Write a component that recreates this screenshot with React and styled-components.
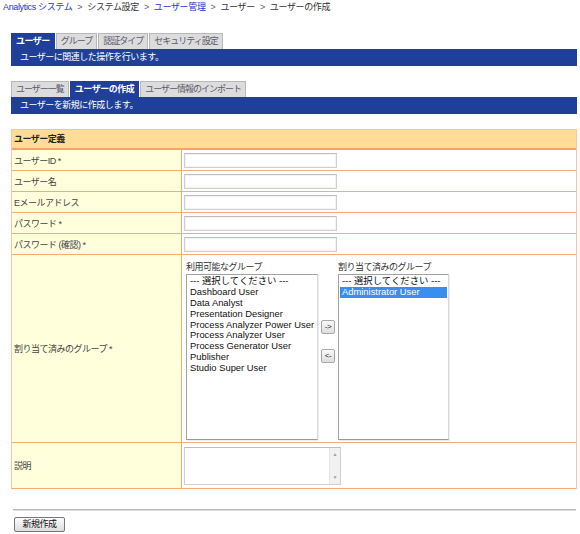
import React from 'react';
import styled, { createGlobalStyle } from 'styled-components';

const Global = createGlobalStyle`
  html, body { margin: 0; padding: 0; background: #fff; }
  body {
    font-family: "Liberation Sans", "Noto Sans CJK JP", sans-serif;
    font-size: 9px;
    color: #333;
  }
  * { box-sizing: border-box; }
`;

const Page = styled.div`
  width: 580px;
  padding: 1px 0 0 3px;
`;

const Breadcrumb = styled.div`
  height: 13px;
  line-height: 13px;
  white-space: nowrap;
  letter-spacing: -0.35px;
`;

const Crumb = styled.span`
  color: ${p => (p.$link ? '#1f32d6' : '#333')};
`;

const Sep = styled.span`
  color: #666;
  margin: 0 5px;
`;

const Content = styled.div`
  margin-left: 8px;
  width: 566px;
`;

const TabBlock = styled.div`
  margin-top: ${p => p.$top}px;
`;

const TabRow = styled.div`
  display: flex;
  height: 16px;
`;

const Tab = styled.div`
  height: 16px;
  line-height: 15px;
  padding: 0 4px;
  margin-right: 1px;
  white-space: nowrap;
  letter-spacing: ${p => (p.$active ? '-0.5px' : '-1px')};
  background: ${p => (p.$active ? '#203f98' : '#dcdcdc')};
  color: ${p => (p.$active ? '#fff' : '#5a5a6a')};
  font-weight: ${p => (p.$active ? 'bold' : 'normal')};
  border: 1px solid ${p => (p.$active ? '#203f98' : '#b8b8b8')};
  border-bottom: none;
`;

const InfoBar = styled.div`
  height: 17px;
  line-height: 17px;
  background: #203f98;
  color: #fff;
  padding-left: 9px;
  letter-spacing: -0.5px;
`;

const Form = styled.div`
  margin-top: 15px;
  display: grid;
  grid-template-columns: 170px 1fr;
  border: 1px solid #ffc2a0;
  border-bottom-color: #ffa877;
`;

const Header = styled.div`
  grid-column: 1 / 3;
  height: 20px;
  line-height: 18px;
  background: #ffdc98;
  border-bottom: 2px solid #ff9e6c;
  padding-left: 2px;
  font-weight: bold;
  color: #222;
  letter-spacing: -0.5px;
`;

const Label = styled.div`
  height: ${p => p.$h}px;
  background: #ffffdc;
  border-right: 1px solid #ffa877;
  border-bottom: ${p => (p.$last ? 'none' : '1px solid #ffa877')};
  display: flex;
  align-items: center;
  padding-left: 2px;
  color: #444;
  letter-spacing: -0.5px;
`;

const Value = styled.div`
  height: ${p => p.$h}px;
  border-bottom: ${p => (p.$last ? 'none' : '1px solid #ffa877')};
  display: flex;
  align-items: ${p => p.$align || 'center'};
  padding-left: 2px;
  padding-top: ${p => p.$pt || 0}px;
`;

const TextInput = styled.div`
  width: 153px;
  height: 15px;
  border: 1px solid #cfcfcf;
  border-top-color: #bdbdbd;
  background: #fff;
  box-shadow: inset 0 0 0 1px #f4f4f4;
`;

const GroupArea = styled.div`
  display: flex;
  align-items: flex-start;
  padding-left: 2px;
`;

const ListCol = styled.div`
  display: flex;
  flex-direction: column;
`;

const ListCaption = styled.div`
  height: 11px;
  line-height: 11px;
  margin-bottom: 1px;
  color: #333;
  letter-spacing: -0.5px;
  white-space: nowrap;
`;

const ListBox = styled.div`
  width: ${p => p.$w}px;
  height: 166px;
  border: 1px solid #a3a3a3;
  border-right-color: #d8d8d8;
  border-bottom-color: #9a9a9a;
  box-shadow: 1px 1px 0 #eeeeee;
  background: #fff;
  padding: 1px 1px;
  overflow: hidden;
`;

const Option = styled.div`
  height: 10.9px;
  line-height: 10.9px;
  font-size: 9.4px;
  padding-left: 2px;
  white-space: nowrap;
  color: ${p => (p.$selected ? '#fff' : '#111')};
  background: ${p => (p.$selected ? '#3a8ef0' : 'transparent')};
`;

const MoveButtons = styled.div`
  display: flex;
  flex-direction: column;
  gap: 15px;
  margin: 58px 3px 0 3px;
`;

const SmallButton = styled.div`
  width: 14px;
  height: 14px;
  border: 1px solid #a8a8a8;
  border-radius: 2px;
  background: linear-gradient(#f8f8f8, #dedede);
  font-size: 8px;
  line-height: 12px;
  text-align: center;
  color: #222;
  letter-spacing: -0.5px;
`;

const TextArea = styled.div`
  width: 157px;
  height: 38px;
  display: flex;
  border: 1px solid #cfcfcf;
  border-top-color: #bdbdbd;
  background: #fff;
`;

const TextAreaBody = styled.div`
  flex: 1;
`;

const ScrollStrip = styled.div`
  width: 11px;
  background: #f1f1f1;
  border-left: 1px solid #e6e6e6;
  display: flex;
  flex-direction: column;
  justify-content: space-between;
  align-items: center;
  padding: 4px 0;
  font-size: 5px;
  line-height: 5px;
  color: #a0a0a0;
`;

const Divider = styled.div`
  margin: 20px 1px 0 2px;
  height: 2px;
  border-top: 1px solid #b9b9b9;
  border-bottom: 1px solid #dcdcdc;
`;

const SubmitButton = styled.div`
  margin: 6px 0 0 3px;
  width: 51px;
  height: 15px;
  border: 1px solid #777;
  border-radius: 2px;
  background: linear-gradient(#fdfdfd, #dcdcdc);
  text-align: center;
  line-height: 13px;
  color: #111;
  letter-spacing: -0.5px;
`;

const available = [
  '--- 選択してください ---',
  'Dashboard User',
  'Data Analyst',
  'Presentation Designer',
  'Process Analyzer Power User',
  'Process Analyzer User',
  'Process Generator User',
  'Publisher',
  'Studio Super User',
];

const textRows = ['ユーザーID *', 'ユーザー名', 'Eメールアドレス', 'パスワード *', 'パスワード (確認) *'];

export default function App() {
  return (
    <>
      <Global />
      <Page>
        <Breadcrumb>
          <Crumb $link>Analytics システム</Crumb>
          <Sep>&gt;</Sep>
          <Crumb>システム設定</Crumb>
          <Sep>&gt;</Sep>
          <Crumb $link>ユーザー管理</Crumb>
          <Sep>&gt;</Sep>
          <Crumb>ユーザー</Crumb>
          <Sep>&gt;</Sep>
          <Crumb>ユーザーの作成</Crumb>
        </Breadcrumb>
        <Content>
          <TabBlock $top={19}>
            <TabRow>
              <Tab $active>ユーザー</Tab>
              <Tab>グループ</Tab>
              <Tab>認証タイプ</Tab>
              <Tab>セキュリティ設定</Tab>
            </TabRow>
            <InfoBar>ユーザーに関連した操作を行います。</InfoBar>
          </TabBlock>
          <TabBlock $top={15}>
            <TabRow>
              <Tab>ユーザー一覧</Tab>
              <Tab $active>ユーザーの作成</Tab>
              <Tab>ユーザー情報のインポート</Tab>
            </TabRow>
            <InfoBar>ユーザーを新規に作成します。</InfoBar>
          </TabBlock>

          <Form>
            <Header>ユーザー定義</Header>
            {textRows.map(t => (
              <React.Fragment key={t}>
                <Label $h={21}>{t}</Label>
                <Value $h={21}>
                  <TextInput />
                </Value>
              </React.Fragment>
            ))}
            <Label $h={188}>割り当て済みのグループ *</Label>
            <Value $h={188} $align="flex-start" $pt={7}>
              <GroupArea>
                <ListCol>
                  <ListCaption>利用可能なグループ</ListCaption>
                  <ListBox $w={132}>
                    {available.map(a => (
                      <Option key={a}>{a}</Option>
                    ))}
                  </ListBox>
                </ListCol>
                <MoveButtons>
                  <SmallButton>-&gt;</SmallButton>
                  <SmallButton>&lt;-</SmallButton>
                </MoveButtons>
                <ListCol>
                  <ListCaption>割り当て済みのグループ</ListCaption>
                  <ListBox $w={111}>
                    <Option>--- 選択してください ---</Option>
                    <Option $selected>Administrator User</Option>
                  </ListBox>
                </ListCol>
              </GroupArea>
            </Value>
            <Label $h={45} $last>説明</Label>
            <Value $h={45} $last>
              <TextArea>
                <TextAreaBody />
                <ScrollStrip>
                  <span>▲</span>
                  <span>▼</span>
                </ScrollStrip>
              </TextArea>
            </Value>
          </Form>

          <Divider />
          <SubmitButton>新規作成</SubmitButton>
        </Content>
      </Page>
    </>
  );
}
